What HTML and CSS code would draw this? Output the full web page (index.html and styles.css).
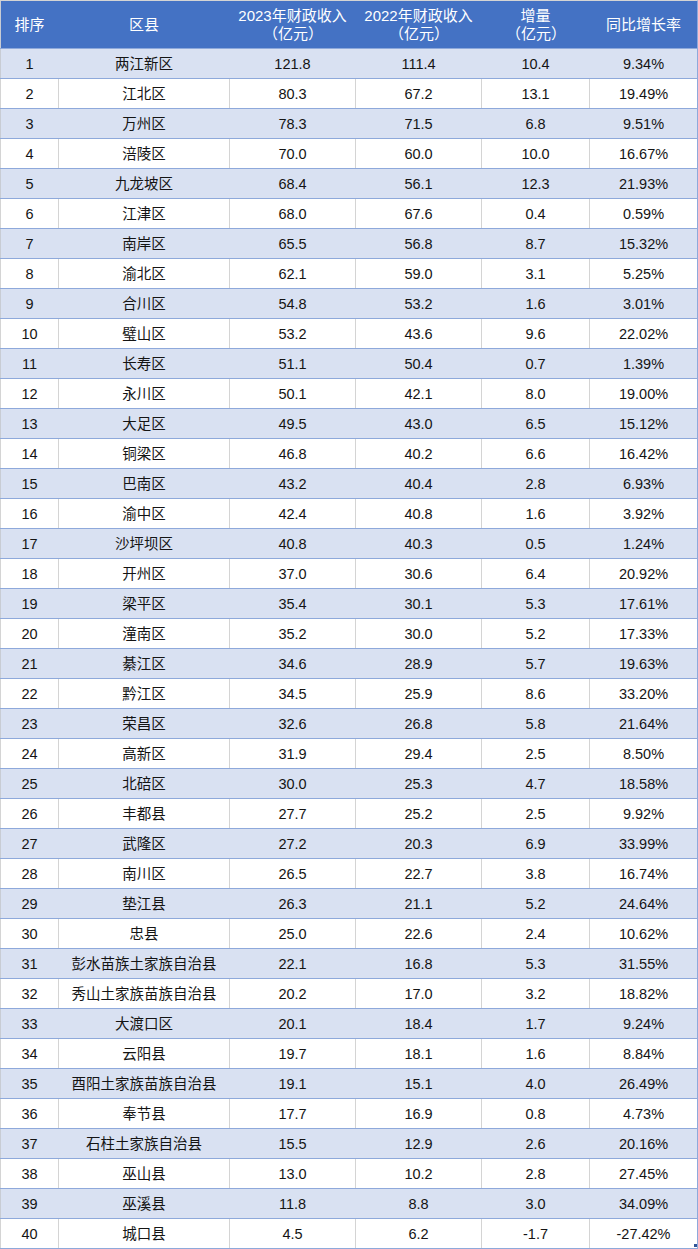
FILE: index.html
```html
<!DOCTYPE html>
<html lang="zh-CN">
<head>
<meta charset="utf-8">
<title>重庆区县财政收入</title>
<link rel="stylesheet" href="styles.css">
</head>
<body>
<div class="sheet">
  <div class="row head">
    <div class="c">排序</div>
    <div class="c">区县</div>
    <div class="c"><span>2023年财政收入</span><span class="unit">（亿元）</span></div>
    <div class="c"><span>2022年财政收入</span><span class="unit">（亿元）</span></div>
    <div class="c"><span>增量</span><span class="unit">（亿元）</span></div>
    <div class="c">同比增长率</div>
  </div>
  <div class="row alt"><div class="c">1</div><div class="c">两江新区</div><div class="c">121.8</div><div class="c">111.4</div><div class="c">10.4</div><div class="c">9.34%</div></div>
  <div class="row"><div class="c">2</div><div class="c">江北区</div><div class="c">80.3</div><div class="c">67.2</div><div class="c">13.1</div><div class="c">19.49%</div></div>
  <div class="row alt"><div class="c">3</div><div class="c">万州区</div><div class="c">78.3</div><div class="c">71.5</div><div class="c">6.8</div><div class="c">9.51%</div></div>
  <div class="row"><div class="c">4</div><div class="c">涪陵区</div><div class="c">70.0</div><div class="c">60.0</div><div class="c">10.0</div><div class="c">16.67%</div></div>
  <div class="row alt"><div class="c">5</div><div class="c">九龙坡区</div><div class="c">68.4</div><div class="c">56.1</div><div class="c">12.3</div><div class="c">21.93%</div></div>
  <div class="row"><div class="c">6</div><div class="c">江津区</div><div class="c">68.0</div><div class="c">67.6</div><div class="c">0.4</div><div class="c">0.59%</div></div>
  <div class="row alt"><div class="c">7</div><div class="c">南岸区</div><div class="c">65.5</div><div class="c">56.8</div><div class="c">8.7</div><div class="c">15.32%</div></div>
  <div class="row"><div class="c">8</div><div class="c">渝北区</div><div class="c">62.1</div><div class="c">59.0</div><div class="c">3.1</div><div class="c">5.25%</div></div>
  <div class="row alt"><div class="c">9</div><div class="c">合川区</div><div class="c">54.8</div><div class="c">53.2</div><div class="c">1.6</div><div class="c">3.01%</div></div>
  <div class="row"><div class="c">10</div><div class="c">璧山区</div><div class="c">53.2</div><div class="c">43.6</div><div class="c">9.6</div><div class="c">22.02%</div></div>
  <div class="row alt"><div class="c">11</div><div class="c">长寿区</div><div class="c">51.1</div><div class="c">50.4</div><div class="c">0.7</div><div class="c">1.39%</div></div>
  <div class="row"><div class="c">12</div><div class="c">永川区</div><div class="c">50.1</div><div class="c">42.1</div><div class="c">8.0</div><div class="c">19.00%</div></div>
  <div class="row alt"><div class="c">13</div><div class="c">大足区</div><div class="c">49.5</div><div class="c">43.0</div><div class="c">6.5</div><div class="c">15.12%</div></div>
  <div class="row"><div class="c">14</div><div class="c">铜梁区</div><div class="c">46.8</div><div class="c">40.2</div><div class="c">6.6</div><div class="c">16.42%</div></div>
  <div class="row alt"><div class="c">15</div><div class="c">巴南区</div><div class="c">43.2</div><div class="c">40.4</div><div class="c">2.8</div><div class="c">6.93%</div></div>
  <div class="row"><div class="c">16</div><div class="c">渝中区</div><div class="c">42.4</div><div class="c">40.8</div><div class="c">1.6</div><div class="c">3.92%</div></div>
  <div class="row alt"><div class="c">17</div><div class="c">沙坪坝区</div><div class="c">40.8</div><div class="c">40.3</div><div class="c">0.5</div><div class="c">1.24%</div></div>
  <div class="row"><div class="c">18</div><div class="c">开州区</div><div class="c">37.0</div><div class="c">30.6</div><div class="c">6.4</div><div class="c">20.92%</div></div>
  <div class="row alt"><div class="c">19</div><div class="c">梁平区</div><div class="c">35.4</div><div class="c">30.1</div><div class="c">5.3</div><div class="c">17.61%</div></div>
  <div class="row"><div class="c">20</div><div class="c">潼南区</div><div class="c">35.2</div><div class="c">30.0</div><div class="c">5.2</div><div class="c">17.33%</div></div>
  <div class="row alt"><div class="c">21</div><div class="c">綦江区</div><div class="c">34.6</div><div class="c">28.9</div><div class="c">5.7</div><div class="c">19.63%</div></div>
  <div class="row"><div class="c">22</div><div class="c">黔江区</div><div class="c">34.5</div><div class="c">25.9</div><div class="c">8.6</div><div class="c">33.20%</div></div>
  <div class="row alt"><div class="c">23</div><div class="c">荣昌区</div><div class="c">32.6</div><div class="c">26.8</div><div class="c">5.8</div><div class="c">21.64%</div></div>
  <div class="row"><div class="c">24</div><div class="c">高新区</div><div class="c">31.9</div><div class="c">29.4</div><div class="c">2.5</div><div class="c">8.50%</div></div>
  <div class="row alt"><div class="c">25</div><div class="c">北碚区</div><div class="c">30.0</div><div class="c">25.3</div><div class="c">4.7</div><div class="c">18.58%</div></div>
  <div class="row"><div class="c">26</div><div class="c">丰都县</div><div class="c">27.7</div><div class="c">25.2</div><div class="c">2.5</div><div class="c">9.92%</div></div>
  <div class="row alt"><div class="c">27</div><div class="c">武隆区</div><div class="c">27.2</div><div class="c">20.3</div><div class="c">6.9</div><div class="c">33.99%</div></div>
  <div class="row"><div class="c">28</div><div class="c">南川区</div><div class="c">26.5</div><div class="c">22.7</div><div class="c">3.8</div><div class="c">16.74%</div></div>
  <div class="row alt"><div class="c">29</div><div class="c">垫江县</div><div class="c">26.3</div><div class="c">21.1</div><div class="c">5.2</div><div class="c">24.64%</div></div>
  <div class="row"><div class="c">30</div><div class="c">忠县</div><div class="c">25.0</div><div class="c">22.6</div><div class="c">2.4</div><div class="c">10.62%</div></div>
  <div class="row alt"><div class="c">31</div><div class="c">彭水苗族土家族自治县</div><div class="c">22.1</div><div class="c">16.8</div><div class="c">5.3</div><div class="c">31.55%</div></div>
  <div class="row"><div class="c">32</div><div class="c">秀山土家族苗族自治县</div><div class="c">20.2</div><div class="c">17.0</div><div class="c">3.2</div><div class="c">18.82%</div></div>
  <div class="row alt"><div class="c">33</div><div class="c">大渡口区</div><div class="c">20.1</div><div class="c">18.4</div><div class="c">1.7</div><div class="c">9.24%</div></div>
  <div class="row"><div class="c">34</div><div class="c">云阳县</div><div class="c">19.7</div><div class="c">18.1</div><div class="c">1.6</div><div class="c">8.84%</div></div>
  <div class="row alt"><div class="c">35</div><div class="c">酉阳土家族苗族自治县</div><div class="c">19.1</div><div class="c">15.1</div><div class="c">4.0</div><div class="c">26.49%</div></div>
  <div class="row"><div class="c">36</div><div class="c">奉节县</div><div class="c">17.7</div><div class="c">16.9</div><div class="c">0.8</div><div class="c">4.73%</div></div>
  <div class="row alt"><div class="c">37</div><div class="c">石柱土家族自治县</div><div class="c">15.5</div><div class="c">12.9</div><div class="c">2.6</div><div class="c">20.16%</div></div>
  <div class="row"><div class="c">38</div><div class="c">巫山县</div><div class="c">13.0</div><div class="c">10.2</div><div class="c">2.8</div><div class="c">27.45%</div></div>
  <div class="row alt"><div class="c">39</div><div class="c">巫溪县</div><div class="c">11.8</div><div class="c">8.8</div><div class="c">3.0</div><div class="c">34.09%</div></div>
  <div class="row"><div class="c">40</div><div class="c">城口县</div><div class="c">4.5</div><div class="c">6.2</div><div class="c">-1.7</div><div class="c">-27.42%</div></div>
  <div class="handle"></div>
</div>
</body>
</html>
```
FILE: styles.css
```css
html, body {
  margin: 0;
  padding: 0;
  background: #ffffff;
}
body {
  font-family: "Liberation Sans", "Noto Sans CJK SC", sans-serif;
  color: #141414;
}
.sheet {
  position: relative;
  width: 698px;
}
.row {
  display: grid;
  grid-template-columns: 58px 171px 126px 126px 108px 108px;
  height: 29px;
  border-bottom: 1px solid #8ea9db;
  border-right: 1px solid #8ea9db;
  background: #ffffff;
  font-size: 14.5px;
}
.row .c {
  display: flex;
  flex-direction: column;
  align-items: center;
  justify-content: center;
  text-align: center;
  border-left: 1px solid #d4d4d4;
  white-space: nowrap;
  line-height: 18px;
}
.row.alt {
  background: #d9e1f2;
}
.row.alt .c {
  border-left-color: #d9e1f2;
}
.row.alt .c:first-child {
  border-left-color: #c8ccd4;
}
.row.head {
  height: 47px;
  border-top: 1px solid #d4d4d4;
  background: #4472c4;
  color: #ffffff;
  font-size: 15px;
}
.row.head .c {
  border-left-color: #4472c4;
  line-height: 18px;
}
.row.head .c:first-child {
  border-left-color: #c8ccd4;
}
.row.head .unit {
  padding: 0 7px 0 8px;
}
.handle {
  position: absolute;
  right: 1px;
  bottom: 2px;
  width: 3px;
  height: 3px;
  background: #2f5597;
}
```
